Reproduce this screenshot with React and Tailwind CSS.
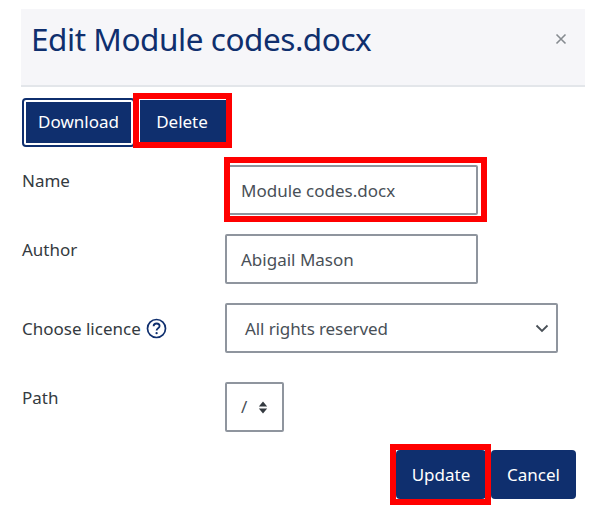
import React from "react";

function Row({ label, extra, className, labelClass = "pt-[4px]", children }) {
  return (
    <div className={`flex ${className}`}>
      <div className={`w-[203px] shrink-0 flex items-start gap-[5px] text-[17px] leading-[24px] text-[#343a40] ${labelClass}`}>
        <span>{label}</span>
        {extra}
      </div>
      {children}
    </div>
  );
}

function RedBox({ className }) {
  return <div className={`absolute border-[6px] border-[#ff0000] pointer-events-none ${className}`} />;
}

function Help() {
  return (
    <svg width="21" height="21" viewBox="0 0 21 21" className="mt-[1px]" fill="none">
      <circle cx="10.5" cy="10.5" r="9" stroke="#0f2f6e" strokeWidth="1.7" />
      <path d="M7.6 8.3c0-1.7 1.3-2.8 3-2.8s3 1 3 2.6c0 2.2-3 2.2-3 4.4" stroke="#0f2f6e" strokeWidth="1.8" fill="none" />
      <circle cx="10.6" cy="15.2" r="1.15" fill="#0f2f6e" />
    </svg>
  );
}

export default function App() {
  return (
    <div className="relative w-[599px] h-[512px] bg-white overflow-hidden font-['Noto_Sans',sans-serif]">
      <div className="pt-[9px] pl-[21px]">
        <header className="w-[564px] h-[78px] bg-[#f6f6f9] border-b-[2px] border-[#e3e6ea] flex items-center justify-between pl-[10px] pr-[17px] pb-[16px]">
          <h1 className="text-[31.5px] leading-[40px] tracking-[-0.45px] text-[#0f2f6e]">Edit Module codes.docx</h1>
          <svg width="14" height="14" viewBox="0 0 14 14">
            <path d="M2.5 2.5l9 9M11.5 2.5l-9 9" stroke="#868b90" strokeWidth="1.6" />
          </svg>
        </header>

        <div className="flex items-center mt-[10px] h-[50px]">
          <div className="ml-[1px] w-[113px] h-[49px] rounded-[4px] border-[2px] border-[#0f2f6e] p-[2px] bg-white">
            <button className="w-full h-full bg-[#0f2f6e] text-white text-[17px] flex items-center justify-center">Download</button>
          </div>
          <button className="ml-[5px] w-[86px] h-[44px] bg-[#0f2f6e] text-white text-[17px] pr-[2px] flex items-center justify-center">Delete</button>
        </div>

        <div className="mt-[18px]">
          <Row label="Name" className="h-[50px] pl-[1px]">
            <div className="w-[253px] h-[50px] border-[2px] border-[#8f959e] rounded-[2px] flex items-center pl-[14px] pt-[1px] text-[17px] text-[#495057]">Module codes.docx</div>
          </Row>
          <Row label="Author" className="h-[50px] pl-[1px] mt-[19px]">
            <div className="w-[253px] h-[50px] border-[2px] border-[#8f959e] rounded-[2px] flex items-center pl-[14px] pt-[1px] text-[17px] text-[#495057]">Abigail Mason</div>
          </Row>
          <Row label="Choose licence" extra={<Help />} labelClass="pt-[14px]" className="h-[50px] pl-[1px] mt-[19px]">
            <div className="w-[333px] h-[50px] border-[2px] border-[#8f959e] rounded-[2px] flex items-center justify-between pl-[18px] pr-[7px] pt-[1px] text-[17px] tracking-[-0.1px] text-[#495057]">
              <span>All rights reserved</span>
              <svg width="14" height="9" viewBox="0 0 14 9" fill="none"><path d="M1.5 1.5L7 7l5.5-5.5" stroke="#495057" strokeWidth="1.8" /></svg>
            </div>
          </Row>
          <Row label="Path" className="h-[50px] pl-[1px] mt-[29px]">
            <div className="w-[59px] h-[50px] border-[2px] border-[#8f959e] rounded-[2px] flex items-center pl-[14px] gap-[11px] text-[17px] text-[#495057]">
              <span>/</span>
              <svg width="10" height="13" viewBox="0 0 10 14"><path d="M5 .5L9.5 5.8H.5zM5 13.5L.5 8.2h9z" fill="#343a40" /></svg>
            </div>
          </Row>
        </div>

        <div className="flex justify-end w-[555px] gap-[5px] mt-[18px]">
          <button className="w-[90px] h-[49px] rounded-[4px] bg-[#0f2f6e] text-white text-[17px] pt-[1px]">Update</button>
          <button className="w-[85px] h-[49px] rounded-[4px] bg-[#0f2f6e] text-white text-[17px] pt-[1px]">Cancel</button>
        </div>
      </div>

      <RedBox className="left-[133px] top-[93px] w-[99px] h-[55px]" />
      <RedBox className="left-[224px] top-[157px] w-[263px] h-[65px]" />
      <RedBox className="left-[390px] top-[444px] w-[101px] h-[61px]" />
    </div>
  );
}
